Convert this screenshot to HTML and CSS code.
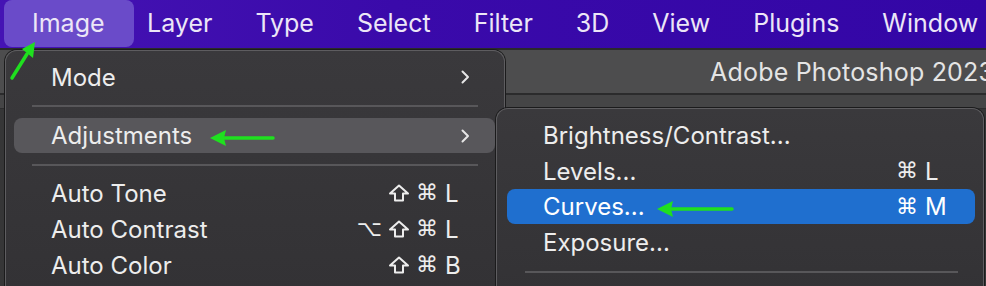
FILE: index.html
```html
<!DOCTYPE html>
<html>
<head>
<meta charset="utf-8">
<link rel="stylesheet" href="styles.css">
</head>
<body>
<div class="menubar">
  <span class="mb-item active">Image</span>
  <span class="mb-item">Layer</span>
  <span class="mb-item">Type</span>
  <span class="mb-item">Select</span>
  <span class="mb-item">Filter</span>
  <span class="mb-item">3D</span>
  <span class="mb-item">View</span>
  <span class="mb-item">Plugins</span>
  <span class="mb-item">Window</span>
</div>
<div class="workspace">
  <div class="titlestrip"><span class="apptitle">Adobe Photoshop 2023</span></div>
  <div class="toolstrip"></div>
  <div class="leftpanel"></div>

  <div class="menu menu-main">
    <div class="row first"><span class="label">Mode</span><svg class="chev" width="9" height="14" viewBox="0 0 9 14"><polyline points="1.5,1.5 7,7 1.5,12.5"/></svg></div>
    <div class="sep"></div>
    <div class="row hl"><span class="label">Adjustments</span><svg class="chev" width="9" height="14" viewBox="0 0 9 14"><polyline points="1.5,1.5 7,7 1.5,12.5"/></svg></div>
    <div class="sep"></div>
    <div class="row after-sep"><span class="label">Auto Tone</span><span class="sc"><svg class="shift" width="22" height="18" viewBox="0 0 22 18"><path d="M11 1.5 L20 9.5 L15 9.5 L15 16.5 L7 16.5 L7 9.5 L2 9.5 Z"/></svg><span class="cmd">⌘</span><span class="key">L</span></span></div>
    <div class="row"><span class="label">Auto Contrast</span><span class="sc"><span class="opt">⌥</span><svg class="shift" width="22" height="18" viewBox="0 0 22 18"><path d="M11 1.5 L20 9.5 L15 9.5 L15 16.5 L7 16.5 L7 9.5 L2 9.5 Z"/></svg><span class="cmd">⌘</span><span class="key">L</span></span></div>
    <div class="row"><span class="label">Auto Color</span><span class="sc"><svg class="shift" width="22" height="18" viewBox="0 0 22 18"><path d="M11 1.5 L20 9.5 L15 9.5 L15 16.5 L7 16.5 L7 9.5 L2 9.5 Z"/></svg><span class="cmd">⌘</span><span class="key">B</span></span></div>
  </div>

  <div class="menu menu-sub">
    <div class="row"><span class="label">Brightness/Contrast...</span></div>
    <div class="row"><span class="label">Levels...</span><span class="sc"><span class="cmd">⌘</span><span class="key">L</span></span></div>
    <div class="row sel"><span class="label">Curves...</span><span class="sc"><span class="cmd">⌘</span><span class="key">M</span></span></div>
    <div class="row"><span class="label">Exposure...</span></div>
    <div class="sep"></div>
  </div>

  <svg class="arrows" width="986" height="238" viewBox="0 0 986 238">
    <g stroke="#1fe01f" stroke-width="3.5" fill="#1fe01f" stroke-linecap="round">
      <line x1="12" y1="30" x2="27" y2="6"/>
      <polygon points="35,-6 22,1 33,10" stroke="none"/>
      <line x1="222" y1="90" x2="273" y2="90"/>
      <polygon points="210,90 226,82 224,90 226,98" stroke="none"/>
      <line x1="670" y1="161" x2="732" y2="161"/>
      <polygon points="657,161 673,153 671,161 673,169" stroke="none"/>
    </g>
  </svg>
</div>
</body>
</html>
```
FILE: styles.css
```css
* { box-sizing: border-box; }
html, body { margin: 0; padding: 0; }
body {
  width: 986px;
  height: 286px;
  overflow: hidden;
  background: #3b3b3c;
  font-family: "Inter", "DejaVu Sans", sans-serif;
}
.menubar {
  height: 48px;
  background: linear-gradient(90deg, #4513b4 0%, #3a0aaa 40%, #3306a6 100%);
  display: flex;
  align-items: flex-start;
  padding-left: 4px;
  white-space: nowrap;
  overflow: hidden;
}
.mb-item {
  color: #ece6f7;
  font-size: 25px;
  font-weight: 400;
  padding: 0 21.5px;
  height: 47px;
  line-height: 46px;
  flex: none;
}
.mb-item.active {
  background: #6a4bc9;
  border-radius: 8px;
  padding: 0 29px 0 28px;
  margin-right: -8px;
}
.workspace {
  position: relative;
  height: 238px;
}
.titlestrip {
  height: 47px;
  background: #4d4d4e;
  border-top: 2px solid #2a2a2b;
  border-bottom: 2px solid #2b2b2c;
  display: flex;
  align-items: center;
  padding-left: 710px;
  overflow: hidden;
}
.apptitle {
  color: #e4e4e4;
  font-size: 25px;
  letter-spacing: 0.2px;
  white-space: nowrap;
}
.toolstrip {
  height: 14px;
  background: #454546;
  border-bottom: 1px solid #2d2d2e;
}
.leftpanel { height: 177px; background: #363637; }

.menu {
  position: absolute;
  background: linear-gradient(180deg, #3a393c 0%, #333235 100%);
  border: 1px solid #5e5d60;
  border-bottom: none;
  border-radius: 12px 12px 0 0;
  box-shadow: 0 0 0 1px #1b1b1c;
  color: #ededed;
  font-size: 24px;
}
.menu-main {
  left: 5px;
  top: 2px;
  width: 500px;
  height: 240px;
  padding-top: 8px;
}
.menu-sub {
  left: 496px;
  top: 60px;
  width: 488px;
  height: 190px;
  padding-top: 8px;
}
.row {
  height: 36px;
  display: flex;
  align-items: center;
  border-radius: 8px;
}
.menu-main .row { margin: 0 9px 0 8px; padding: 0 34px 0 37px; }
.menu-main .row.first,
.menu-main .row.hl { padding-right: 25px; }
.menu-main .row.hl { height: 35px; margin-top: 11px; background: #58575b; }
.menu-main .row.after-sep { margin-top: 9px; }
.menu-sub .row { margin: 0 8px 0 10px; padding: 0 28px 0 36px; }
.label { flex: 1; white-space: nowrap; }
.chev { fill: none; stroke: #e6e6e6; stroke-width: 2; stroke-linecap: round; stroke-linejoin: round; }
.row.sel { background: #1f6fcf; color: #fff; height: 35px; }
.sep {
  height: 2px;
  background: #58575a;
  margin: 10px 26px 0 26px;
}
.menu-main .hl + .sep { margin-top: 11px; }
.menu-sub .sep { margin: 11px 25px 0 28px; }
.sc { display: flex; align-items: center; gap: 7px; }
.menu-main .sc { gap: 6px; }
.shift { fill: none; stroke: #ededed; stroke-width: 2; stroke-linejoin: round; }
.cmd, .opt {
  font-family: "DejaVu Sans", sans-serif;
  font-size: 22px;
  line-height: 1;
}
.key { width: 16px; text-align: left; }
.menu-main .key { margin-left: 1px; }
.menu-sub .key { width: 22px; }
.arrows {
  position: absolute;
  left: 0;
  top: 0;
  overflow: visible;
}
```
